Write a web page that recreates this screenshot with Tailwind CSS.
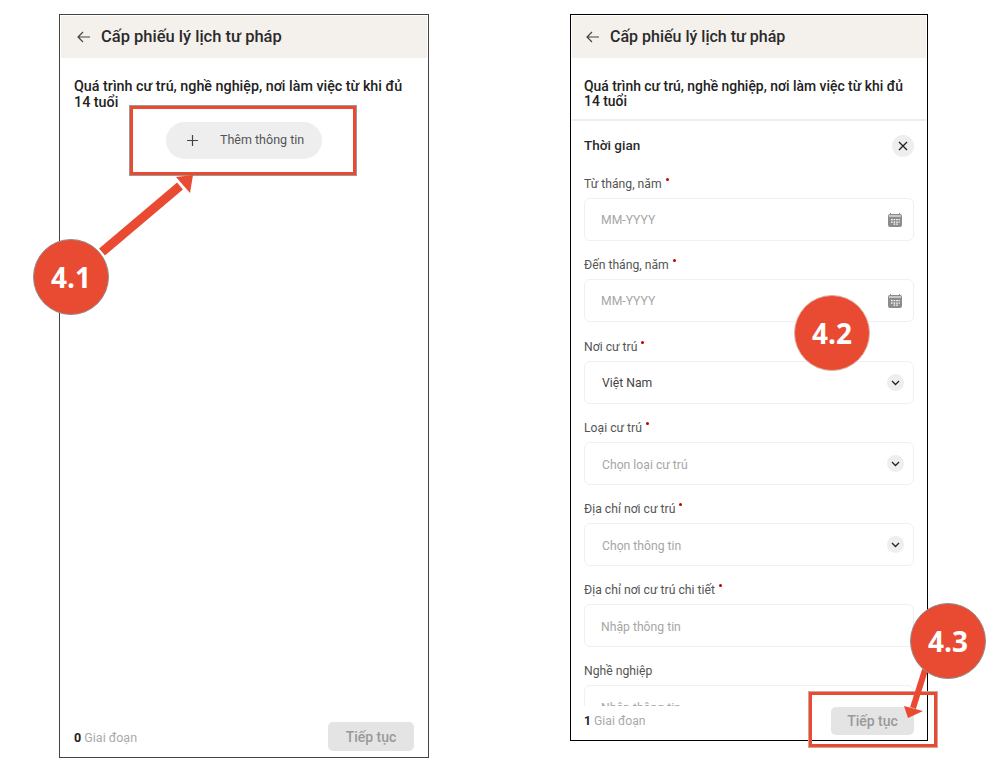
<!DOCTYPE html>
<html lang="vi">
<head>
<meta charset="utf-8">
<title>Cấp phiếu lý lịch tư pháp</title>
<script src="https://cdn.jsdelivr.net/npm/@tailwindcss/browser@4"></script>
</head>
<body class="bg-white">
<div class="relative w-[1000px] h-[767px] overflow-hidden font-['Roboto',sans-serif] pt-[14px] pl-[59px] flex items-start">

    <!-- Left phone -->
    <div class="w-[370px] h-[744px] shrink-0 border-[1.5px] border-[#444] bg-white flex flex-col pt-[1px] px-[1px]">
        <header class="h-[42px] bg-[#f4f0ec] flex items-center pl-[15px] gap-[9px] shrink-0">
            <svg width="16" height="16" viewBox="0 0 16 16" fill="none" stroke="#444" stroke-width="1.2"><path d="M14 8H2M7 3 2 8l5 5"/></svg>
            <h1 class="text-[16.5px] font-medium text-[#2a2a2a]">Cấp phiếu lý lịch tư pháp</h1>
        </header>
        <div class="flex-1 px-[13px] pt-[20px]">
            <p class="text-[14.3px] leading-[16px] font-medium text-[#222] w-[340px]">Quá trình cư trú, nghề nghiệp, nơi làm việc từ khi đủ 14 tuổi</p>
            <button class="mt-[12px] ml-[92px] w-[156px] h-[37px] rounded-full bg-[#eeeeee] flex items-center text-[12.5px] text-[#555]">
                <svg class="ml-[20px]" width="13" height="13" viewBox="0 0 13 13" fill="none" stroke="#444" stroke-width="1.2"><path d="M6.5 1v11M1 6.5h11"/></svg>
                <span class="ml-[21px]">Thêm thông tin</span>
            </button>
        </div>
        <footer class="h-[35px] px-[13px] flex justify-between items-start shrink-0">
            <span class="text-[12.5px] mt-[7px] text-[#aaa]"><b class="font-bold text-[#222]">0</b> Giai đoạn</span>
            <button class="w-[86px] h-[29px] pt-[1px] rounded-[5px] bg-[#e4e4e4] text-[14px] font-medium text-[#999]">Tiếp tục</button>
        </footer>
    </div>

    <!-- Right phone -->
    <div class="ml-[141px] w-[358px] h-[727px] shrink-0 border-[1.5px] border-black bg-white flex flex-col pt-[1px] px-[1px]">
        <header class="h-[42px] bg-[#f4f0ec] flex items-center pl-[13px] gap-[9px] shrink-0">
            <svg width="16" height="16" viewBox="0 0 16 16" fill="none" stroke="#444" stroke-width="1.2"><path d="M14 8H2M7 3 2 8l5 5"/></svg>
            <h1 class="text-[16px] font-medium text-[#2a2a2a]">Cấp phiếu lý lịch tư pháp</h1>
        </header>
        <div class="px-[12px] pt-[21px] h-[63px] border-b-2 border-[#eeeeee] shrink-0">
            <p class="text-[13.9px] leading-[15px] font-medium text-[#222] w-[330px]">Quá trình cư trú, nghề nghiệp, nơi làm việc từ khi đủ 14 tuổi</p>
        </div>
        <div class="flex-1 overflow-hidden px-[12px]">
            <div class="flex items-center justify-between h-[23px] mt-[13px]">
                <h2 class="text-[13.5px] font-medium text-[#2a2a2a]">Thời gian</h2>
                <button class="w-[22px] h-[22px] rounded-full bg-[#eeeeee] flex items-center justify-center">
                    <svg width="10" height="10" viewBox="0 0 10 10" fill="none" stroke="#222" stroke-width="1.3"><path d="M1 1l8 8M9 1 1 9"/></svg>
                </button>
            </div>

            <label class="flex items-start gap-[4px] mt-[20px] h-[15px] text-[12.2px] leading-[15px] text-[#555]">Từ tháng, năm <i class="w-[3px] h-[3px] mt-[1px] rounded-full bg-[#c00000]"></i></label>
            <div class="mt-[6px] h-[43px] rounded-[6px] border border-[#f0f0f0] flex items-center justify-between pl-[16px] pr-[10px] text-[12.2px] text-[#a6a6a6]">
                <span class="mt-[2px]">MM-YYYY</span>
                <svg width="16" height="16" viewBox="0 0 16 16"><path fill="#8c8c8c" d="M3 1h1v1h8V1h1v1a2 2 0 0 1 2 2v9a2 2 0 0 1-2 2H3a2 2 0 0 1-2-2V4a2 2 0 0 1 2-2z"/><path fill="#fff" d="M2 3.6h12v1H2zM4 7h1.6v1.3H4zM6.6 7h1.6v1.3H6.6zM9.2 7h1.6v1.3H9.2zM11.6 7h1.2v1.3h-1.2zM4 9.4h1.6v1.3H4zM6.6 9.4h1.6v1.3H6.6zM9.2 9.4h1.6v1.3H9.2zM11.6 9.4h1.2v1.3h-1.2zM6.6 11.6h1.6v1.2H6.6zM9.2 11.6h1.6v1.2H9.2z"/></svg>
            </div>

            <label class="flex items-start gap-[4px] mt-[17px] h-[15px] text-[12.2px] leading-[15px] text-[#555]">Đến tháng, năm <i class="w-[3px] h-[3px] mt-[1px] rounded-full bg-[#c00000]"></i></label>
            <div class="mt-[6px] h-[43px] rounded-[6px] border border-[#f0f0f0] flex items-center justify-between pl-[16px] pr-[10px] text-[12.2px] text-[#a6a6a6]">
                <span class="mt-[2px]">MM-YYYY</span>
                <svg width="16" height="16" viewBox="0 0 16 16"><path fill="#8c8c8c" d="M3 1h1v1h8V1h1v1a2 2 0 0 1 2 2v9a2 2 0 0 1-2 2H3a2 2 0 0 1-2-2V4a2 2 0 0 1 2-2z"/><path fill="#fff" d="M2 3.6h12v1H2zM4 7h1.6v1.3H4zM6.6 7h1.6v1.3H6.6zM9.2 7h1.6v1.3H9.2zM11.6 7h1.2v1.3h-1.2zM4 9.4h1.6v1.3H4zM6.6 9.4h1.6v1.3H6.6zM9.2 9.4h1.6v1.3H9.2zM11.6 9.4h1.2v1.3h-1.2zM6.6 11.6h1.6v1.2H6.6zM9.2 11.6h1.6v1.2H9.2z"/></svg>
            </div>

            <label class="flex items-start gap-[4px] mt-[18px] h-[15px] text-[12.2px] leading-[15px] text-[#555]">Nơi cư trú <i class="w-[3px] h-[3px] mt-[1px] rounded-full bg-[#c00000]"></i></label>
            <div class="mt-[6px] h-[43px] rounded-[6px] border border-[#f0f0f0] flex items-center justify-between pl-[17px] pr-[9px] text-[12.2px] text-[#444]">
                <span class="mt-[2px]">Việt Nam</span>
                <span class="w-[17px] h-[17px] rounded-full bg-[#eeeeee] flex items-center justify-center"><svg width="9" height="6" viewBox="0 0 9 6" fill="none" stroke="#222" stroke-width="1.3"><path d="M1 1l3.5 3.5L8 1"/></svg></span>
            </div>

            <label class="flex items-start gap-[4px] mt-[17px] h-[15px] text-[12.2px] leading-[15px] text-[#555]">Loại cư trú <i class="w-[3px] h-[3px] mt-[1px] rounded-full bg-[#c00000]"></i></label>
            <div class="mt-[6px] h-[43px] rounded-[6px] border border-[#f0f0f0] flex items-center justify-between pl-[17px] pr-[9px] text-[12.2px] text-[#a6a6a6]">
                <span class="mt-[3px]">Chọn loại cư trú</span>
                <span class="w-[17px] h-[17px] rounded-full bg-[#eeeeee] flex items-center justify-center"><svg width="9" height="6" viewBox="0 0 9 6" fill="none" stroke="#222" stroke-width="1.3"><path d="M1 1l3.5 3.5L8 1"/></svg></span>
            </div>

            <label class="flex items-start gap-[4px] mt-[17px] h-[15px] text-[12.2px] leading-[15px] text-[#555]">Địa chỉ nơi cư trú <i class="w-[3px] h-[3px] mt-[1px] rounded-full bg-[#c00000]"></i></label>
            <div class="mt-[6px] h-[43px] rounded-[6px] border border-[#f0f0f0] flex items-center justify-between pl-[17px] pr-[9px] text-[12.2px] text-[#a6a6a6]">
                <span class="mt-[3px]">Chọn thông tin</span>
                <span class="w-[17px] h-[17px] rounded-full bg-[#eeeeee] flex items-center justify-center"><svg width="9" height="6" viewBox="0 0 9 6" fill="none" stroke="#222" stroke-width="1.3"><path d="M1 1l3.5 3.5L8 1"/></svg></span>
            </div>

            <label class="flex items-start gap-[4px] mt-[17px] h-[15px] text-[12.2px] leading-[15px] text-[#555]">Địa chỉ nơi cư trú chi tiết <i class="w-[3px] h-[3px] mt-[1px] rounded-full bg-[#c00000]"></i></label>
            <div class="mt-[6px] h-[43px] rounded-[6px] border border-[#f0f0f0] flex items-center pl-[16px] text-[12.2px] text-[#a6a6a6]"><span class="mt-[3px]">Nhập thông tin</span></div>

            <label class="block mt-[17px] h-[15px] text-[12.2px] leading-[15px] text-[#555]">Nghề nghiệp</label>
            <div class="mt-[6px] h-[43px] rounded-[6px] border border-[#f0f0f0] flex items-center pl-[16px] text-[12.2px] text-[#a6a6a6]"><span class="mt-[3px]">Nhập thông tin</span></div>
        </div>
        <footer class="h-[34px] pl-[12px] pr-[12px] flex justify-between items-start shrink-0 bg-white">
            <span class="text-[12.2px] mt-[6px] text-[#aaa]"><b class="font-bold text-[#222]">1</b> Giai đoạn</span>
            <button class="w-[83px] h-[28px] mt-[1px] rounded-[5px] bg-[#e4e4e4] text-[14px] font-medium text-[#999]">Tiếp tục</button>
        </footer>
    </div>

    <!-- Annotations drawn over the screenshots -->
    <div class="absolute left-[130px] top-[106px] w-[226px] h-[69px] border-[3px] border-[#e94b32] outline outline-1 outline-[#9a9a9a]"></div>
    <div class="absolute left-[809px] top-[692px] w-[128px] h-[55px] border-[3px] border-[#e94b32] outline outline-1 outline-[#c8a8a0]"></div>

    <svg class="absolute left-0 top-0 pointer-events-none" width="1000" height="767" viewBox="0 0 1000 767">
        <path d="M102 252 180 186" stroke="#e94b32" stroke-width="9" fill="none"/>
        <path d="M193 175 176 177 190 193z" fill="#e94b32"/>
        <path d="M925 670 913 708" stroke="#e94b32" stroke-width="6" fill="none"/>
        <path d="M908 718 904 706 923 711z" fill="#e94b32"/>
    </svg>

    <div class="absolute left-[33px] top-[239px] w-[76px] h-[76px] rounded-full bg-[#e94b32] border border-[#8f8f8f] flex items-center justify-center text-white text-[28px] font-bold font-['Open_Sans',sans-serif]">4.1</div>
    <div class="absolute left-[794px] top-[295px] w-[76px] h-[76px] rounded-full bg-[#e94b32] border border-[#e0b0a5] flex items-center justify-center text-white text-[28px] font-bold font-['Open_Sans',sans-serif]">4.2</div>
    <div class="absolute left-[910px] top-[603px] w-[76px] h-[76px] rounded-full bg-[#e94b32] border border-[#8f8f8f] flex items-center justify-center text-white text-[28px] font-bold font-['Open_Sans',sans-serif]">4.3</div>
</div>
</body>
</html>
